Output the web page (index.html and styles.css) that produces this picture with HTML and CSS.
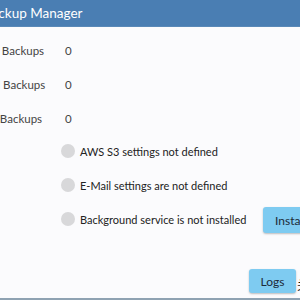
FILE: index.html
```html
<!DOCTYPE html>
<html lang="en">
  <head>
    <meta charset="UTF-8" />
    <title>Backup Manager</title>
    <link rel="stylesheet" href="styles.css">
  </head>
  <body>
    <div class="window">
      <div class="titlebar">
        <span class="title">Backup Manager</span>
      </div>
      <div class="content">
        <div class="stats">
          <div class="stat-row">
            <span class="stat-label">Local Backups</span>
            <span class="stat-value">0</span>
          </div>
          <div class="stat-row">
            <span class="stat-label">Email Backups</span>
            <span class="stat-value">0</span>
          </div>
          <div class="stat-row stat-row-short">
            <span class="stat-label">S3 Backups</span>
            <span class="stat-value">0</span>
          </div>
        </div>

        <div class="status-list">
          <div class="status-row">
            <span class="status-dot"></span>
            <span class="status-text">AWS S3 settings not defined</span>
          </div>
          <div class="status-row">
            <span class="status-dot"></span>
            <span class="status-text">E-Mail settings are not defined</span>
          </div>
          <div class="status-row">
            <span class="status-dot"></span>
            <span class="status-text">Background service is not installed</span>
            <button class="button-install">Install</button>
          </div>
        </div>

        <div class="footer">
          <button class="button-logs">Logs</button>
          <span class="footer-mark">关</span>
        </div>
      </div>
    </div>
  </body>
</html>
```

FILE: styles.css
```css
* {
  margin: 0;
  padding: 0;
  box-sizing: border-box;
  font-family: "Lato", "Noto Sans CJK SC", sans-serif;
}

body {
  width: 300px;
  height: 300px;
  overflow: hidden;
  background: #fbfbfd;
  color: #333;
}

/* the app window is wider than the shot, its left edge is cut off */
.window {
  width: 400px;
  height: 300px;
  margin-left: -60px;
  display: flex;
  flex-direction: column;
  border-bottom: 2px solid #8ea2b2;
}

.titlebar {
  height: 27px;
  flex: none;
  background-color: #4a7eb3;
  border-bottom: 1px solid #5a89b8;
  display: flex;
  align-items: center;
  padding-left: 43px;
}

.title {
  color: white;
  font-size: 13.5px;
  white-space: nowrap;
  padding-bottom: 1px;
}

.content {
  flex: 1;
  display: flex;
  flex-direction: column;
}

.stats {
  padding-top: 14px;
  padding-left: 33px;
  display: flex;
  flex-direction: column;
  gap: 16px;
}

.stat-row {
  display: flex;
  align-items: center;
  height: 18px;
  font-size: 11.5px;
  color: #444;
  white-space: nowrap;
}

.stat-label {
  width: 92px;
  flex: none;
}

.stat-row-short .stat-label {
  margin-left: 11px;
  width: 81px;
}

.status-list {
  margin-top: 10px;
  padding-left: 121px;
  display: flex;
  flex-direction: column;
  gap: 6px;
}

.status-row {
  display: grid;
  grid-template-columns: 14px 178px 70px;
  column-gap: 5px;
  align-items: center;
  height: 28px;
  white-space: nowrap;
  font-size: 11px;
  color: #222;
}

.status-dot {
  width: 14px;
  height: 14px;
  border-radius: 50%;
  background-color: #d8d8da;
}

.button-install,
.button-logs {
  border: none;
  border-radius: 3px;
  background-color: #7ecbf1;
  color: #1c2a38;
  font-size: 12px;
  box-shadow: 0 1px 2px rgba(0, 0, 0, 0.25);
  cursor: pointer;
}

.button-install {
  height: 26px;
  margin-top: 2px;
  text-align: left;
  padding-left: 12px;
}

.footer {
  margin-top: auto;
  margin-bottom: 5px;
  padding-left: 309px;
  display: flex;
  align-items: flex-end;
}

.button-logs {
  width: 47px;
  height: 24px;
}

.footer-mark {
  margin-left: 1px;
  font-size: 12px;
  color: #111;
  line-height: 14px;
}
```
